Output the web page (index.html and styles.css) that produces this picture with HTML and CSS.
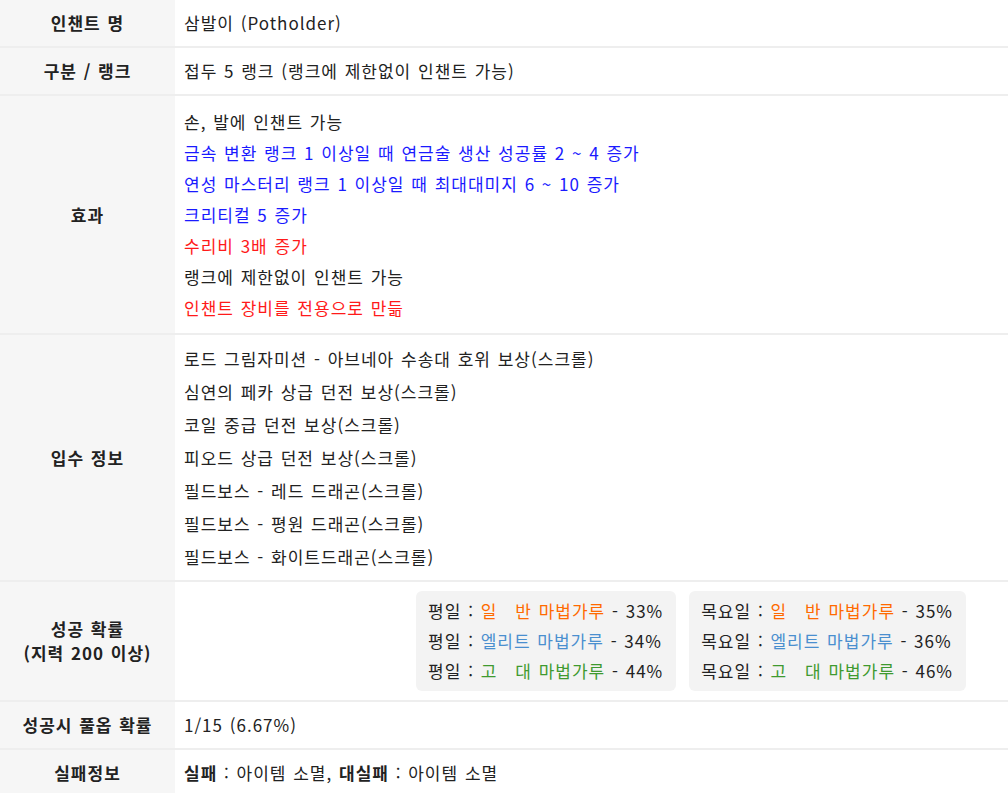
FILE: index.html
```html
<!DOCTYPE html>
<html lang="ko">
<head>
    <meta charset="UTF-8">
    <meta name="viewport" content="width=device-width, initial-scale=1.0">
    <title>인챈트 정보 - 삼발이</title>
    <link rel="stylesheet" href="styles.css">
</head>
<body>
    <table class="info-table">
        <tr>
            <th>인챈트 명</th>
            <td>삼발이 (Potholder)</td>
        </tr>
        <tr>
            <th>구분 / 랭크</th>
            <td>접두 5 랭크 (랭크에 제한없이 인챈트 가능)</td>
        </tr>
        <tr>
            <th>효과</th>
            <td class="lines effects">
                <p>손, 발에 인챈트 가능</p>
                <p class="blue">금속 변환 랭크 1 이상일 때 연금술 생산 성공률 2 ~ 4 증가</p>
                <p class="blue">연성 마스터리 랭크 1 이상일 때 최대대미지 6 ~ 10 증가</p>
                <p class="blue">크리티컬 5 증가</p>
                <p class="red">수리비 3배 증가</p>
                <p>랭크에 제한없이 인챈트 가능</p>
                <p class="red">인챈트 장비를 전용으로 만듦</p>
            </td>
        </tr>
        <tr>
            <th>입수 정보</th>
            <td class="lines drops">
                <p>로드 그림자미션 - 아브네아 수송대 호위 보상(스크롤)</p>
                <p>심연의 페카 상급 던전 보상(스크롤)</p>
                <p>코일 중급 던전 보상(스크롤)</p>
                <p>피오드 상급 던전 보상(스크롤)</p>
                <p>필드보스 - 레드 드래곤(스크롤)</p>
                <p>필드보스 - 평원 드래곤(스크롤)</p>
                <p>필드보스 - 화이트드래곤(스크롤)</p>
            </td>
        </tr>
        <tr>
            <th class="two-line">성공 확률<br>(지력 200 이상)</th>
            <td class="rates-cell">
                <div class="rates">
                    <div class="rate-box">
                        <p>평일 : <span class="normal">일&emsp;반 마법가루</span> - 33%</p>
                        <p>평일 : <span class="elite">엘리트 마법가루</span> - 34%</p>
                        <p>평일 : <span class="ancient">고&emsp;대 마법가루</span> - 44%</p>
                    </div>
                    <div class="rate-box">
                        <p>목요일 : <span class="normal">일&emsp;반 마법가루</span> - 35%</p>
                        <p>목요일 : <span class="elite">엘리트 마법가루</span> - 36%</p>
                        <p>목요일 : <span class="ancient">고&emsp;대 마법가루</span> - 46%</p>
                    </div>
                </div>
            </td>
        </tr>
        <tr>
            <th>성공시 풀옵 확률</th>
            <td>1/15 (6.67%)</td>
        </tr>
        <tr>
            <th>실패정보</th>
            <td><b>실패</b> : 아이템 소멸, <b>대실패</b> : 아이템 소멸</td>
        </tr>
    </table>
</body>
</html>
```

FILE: styles.css
```css
* {
    box-sizing: border-box;
    margin: 0;
    padding: 0;
}

body {
    background-color: #fff;
    font-family: "Noto Sans CJK KR", "Noto Sans", sans-serif;
    font-size: 17px;
    letter-spacing: 1px;
    word-spacing: 1px;
    color: #222;
}

.info-table {
    width: 100%;
    border-collapse: collapse;
}

.info-table tr {
    border-bottom: 2px solid #eee;
}

.info-table tr:last-child {
    border-bottom: none;
}

.info-table th {
    width: 175px;
    background-color: #f6f6f6;
    font-weight: 700;
    text-align: center;
    line-height: 22px;
    padding: 12px 4px;
}

.info-table th.two-line {
    line-height: 24px;
}

.info-table td {
    padding: 12px 9px;
    line-height: 22px;
    vertical-align: middle;
}

.lines p {
    line-height: 31px;
}

.effects {
    padding-top: 10px !important;
    padding-bottom: 10px !important;
}

.drops p {
    line-height: 33px;
}

.drops {
    padding-top: 7px !important;
    padding-bottom: 7px !important;
}

.blue {
    color: #1a1aff;
}

.red {
    color: #ff1a1a;
}

.rates-cell {
    padding: 9px 42px 9px 9px !important;
}

.rates {
    display: flex;
    justify-content: flex-end;
    gap: 13px;
}

.rate-box {
    background-color: #f3f3f3;
    border-radius: 6px;
    padding: 5px 13px 5px 12px;
}

.rate-box p {
    line-height: 30px;
    white-space: nowrap;
}

.normal {
    color: #ff6a00;
}

.elite {
    color: #4a8fcf;
}

.ancient {
    color: #3f9a2f;
}
```
